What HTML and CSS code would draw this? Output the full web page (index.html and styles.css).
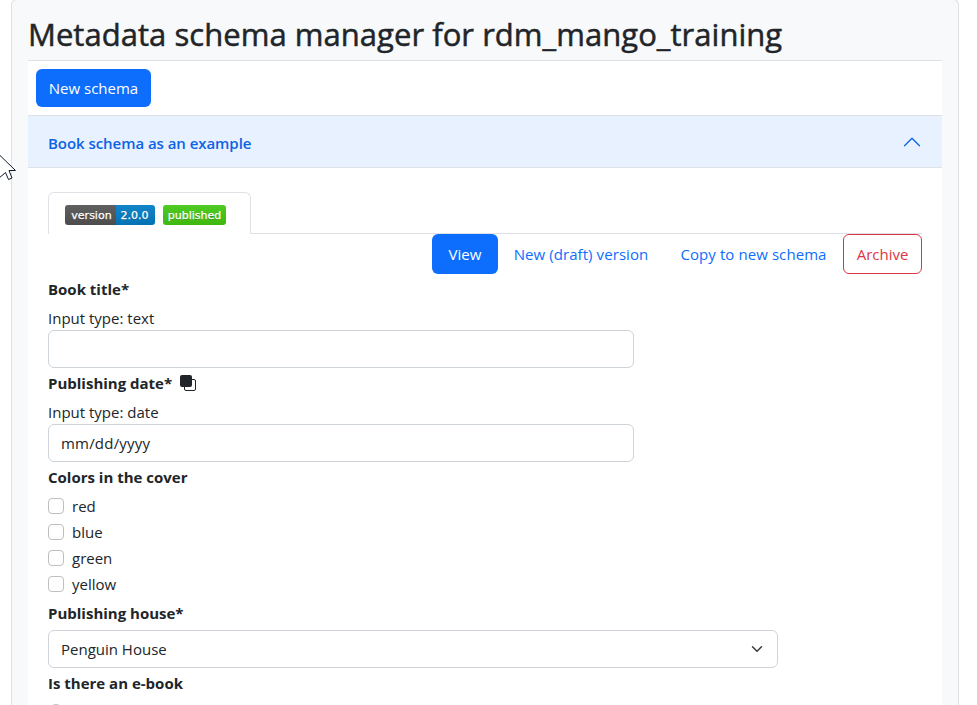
FILE: index.html
```
<!DOCTYPE html>
<html lang="en">
<head>
<meta charset="utf-8">
<title>Metadata schema manager</title>
<link rel="stylesheet" href="styles.css">
</head>
<body>
<main class="panel">
  <h1>Metadata schema manager for rdm_mango_training</h1>
  <div class="accordion">
    <div class="toolbar"><button class="btn primary new-schema">New schema</button></div>
    <div class="accordion-header">
      <span class="schema-name">Book schema as an example</span>
      <svg width="20" height="20" viewBox="0 0 16 16" fill="#0c63e4"><path fill-rule="evenodd" d="M1.646 11.354a.5.5 0 0 0 .708 0L8 5.707l5.646 5.647a.5.5 0 0 0 .708-.708l-6-6a.5.5 0 0 0-.708 0l-6 6a.5.5 0 0 0 0 .708z"/></svg>
    </div>
    <div class="accordion-body">
      <div class="tabs">
        <div class="tab">
          <span class="badge"><span class="part gray">version</span><span class="part blue">2.0.0</span></span>
          <span class="badge"><span class="part green">published</span></span>
        </div>
      </div>
      <div class="actions">
        <button class="btn primary view">View</button>
        <button class="btn link draft">New (draft) version</button>
        <button class="btn link copy">Copy to new schema</button>
        <button class="btn danger">Archive</button>
      </div>
      <form>
        <div class="label">Book title*</div>
        <div class="hint">Input type: text</div>
        <div class="control"></div>
        <div class="label">Publishing date*
          <svg class="copy-icon" width="16" height="16" viewBox="0 0 16 16"><rect x="4.5" y="4.5" width="11" height="11" rx="1.5" fill="#fff" stroke="#212529"/><rect width="12" height="12" rx="2" fill="#212529"/></svg>
        </div>
        <div class="hint">Input type: date</div>
        <div class="control"><span class="date">mm/dd/yyyy</span></div>
        <div class="label">Colors in the cover</div>
        <div class="checks">
          <label class="check"><i class="box"></i><span>red</span></label>
          <label class="check"><i class="box"></i><span>blue</span></label>
          <label class="check"><i class="box"></i><span>green</span></label>
          <label class="check"><i class="box"></i><span>yellow</span></label>
        </div>
        <div class="label">Publishing house*</div>
        <div class="control select"><span>Penguin House</span>
          <svg width="16" height="12" viewBox="0 0 16 16" fill="none" stroke="#343a40" stroke-width="2" stroke-linecap="round" stroke-linejoin="round"><path d="m2 5 6 6 6-6"/></svg>
        </div>
        <div class="label">Is there an e-book</div>
        <label class="check"><i class="box radio"></i></label>
      </form>
    </div>
  </div>
</main>
<svg class="cursor" width="17" height="30" viewBox="0 0 17 30"><path d="M-1 2.500 L15.500 18.500 H9 L12 26 L8.500 27.500 L5.500 20.500 L-1 26" fill="#fff" stroke="#111827"/></svg>
</body>
</html>
```
FILE: styles.css
```
* { box-sizing: border-box; }
body {
  margin: 0;
  height: 705px;
  overflow: hidden;
  background: #fff;
  color: #212529;
  font: 15px/24px "Open Sans", "Noto Sans", sans-serif;
}
.panel {
  width: 948px;
  height: 706px;
  margin: -1px 0 0 11px;
  padding: 0 16px;
  overflow: hidden;
  background: #f8f9fa;
  border: 1px solid #dee2e6;
  border-bottom: 0;
  border-radius: 6px 6px 0 0;
}
h1 {
  height: 60px;
  margin: 0;
  padding-top: 15px;
  font-size: 31px;
  line-height: 38px;
  font-weight: 500;
  letter-spacing: .04px;
  -webkit-text-stroke: .5px #212529;
  white-space: nowrap;
}
.accordion { background: #fff; border-top: 1px solid #dee2e6; height: 645px; }
.toolbar { height: 54px; padding: 8px; }
.btn {
  height: 40px;
  border: 1px solid transparent;
  border-radius: 6px;
  padding: 0;
  background: none;
  font: inherit;
  white-space: nowrap;
}
.primary { background: #0d6efd; color: #fff; }
.link { color: #0d6efd; letter-spacing: .08px; }
.danger { width: 79px; border-color: #dc3545; color: #dc3545; }
.new-schema { width: 115px; height: 38px; }
.accordion-header {
  display: flex;
  align-items: center;
  justify-content: space-between;
  height: 53px;
  padding: 2px 20px 0;
  background: #e7f1ff;
  border: solid #dee2e6;
  border-width: 1px 0;
  color: #0c63e4;
  font-weight: 600;
  letter-spacing: -.05px;
}
.accordion-header svg { margin-top: -1px; }
.accordion-body { padding: 24px 20px 0; }
.tabs { display: flex; height: 42px; border-bottom: 1px solid #dee2e6; }
.tab {
  display: flex;
  gap: 8px;
  width: 203px;
  height: 42px;
  padding: 12px 16px;
  background: #fff;
  border: 1px solid #dee2e6;
  border-bottom: 0;
  border-radius: 6px 6px 0 0;
}
.badge {
  display: flex;
  height: 20px;
  border-radius: 3px;
  overflow: hidden;
  color: #fff;
  font: 11px/21px "DejaVu Sans", sans-serif;
  -webkit-text-stroke: .25px #fff;
  text-shadow: 0 1px 0 rgba(1, 1, 1, .3);
}
.part { text-align: center; white-space: nowrap; }
.gray { width: 51px; padding-left: 2px; background: linear-gradient(#606060, #4c4c4c); }
.blue { width: 39px; padding-right: 2px; background: linear-gradient(#1284c8, #0072b4); }
.green { width: 63px; background: linear-gradient(#4fcb24, #3fb70f); }
.actions { display: flex; justify-content: flex-end; height: 40px; }
.view { width: 66px; }
.draft { width: 166px; }
.copy { width: 179px; }
.label { display: flex; align-items: center; height: 24px; margin: 3px 0 5px; font-weight: 700; }
.copy-icon { margin-left: 8px; }
.control {
  display: flex;
  align-items: center;
  width: 586px;
  height: 38px;
  padding: 0 12px;
  border: 1px solid #ced4da;
  border-radius: 6px;
}
.date { letter-spacing: .2px; }
.select { width: 730px; justify-content: space-between; }
.checks { display: flex; flex-direction: column; gap: 2px; padding-bottom: 2px; }
.check { display: flex; align-items: center; gap: 8px; height: 24px; }
.box { width: 16px; height: 16px; border: 1px solid #bfbfbf; border-radius: 4px; }
.radio { border-radius: 50%; }
.cursor { position: absolute; left: 0; top: 152px; }
```
